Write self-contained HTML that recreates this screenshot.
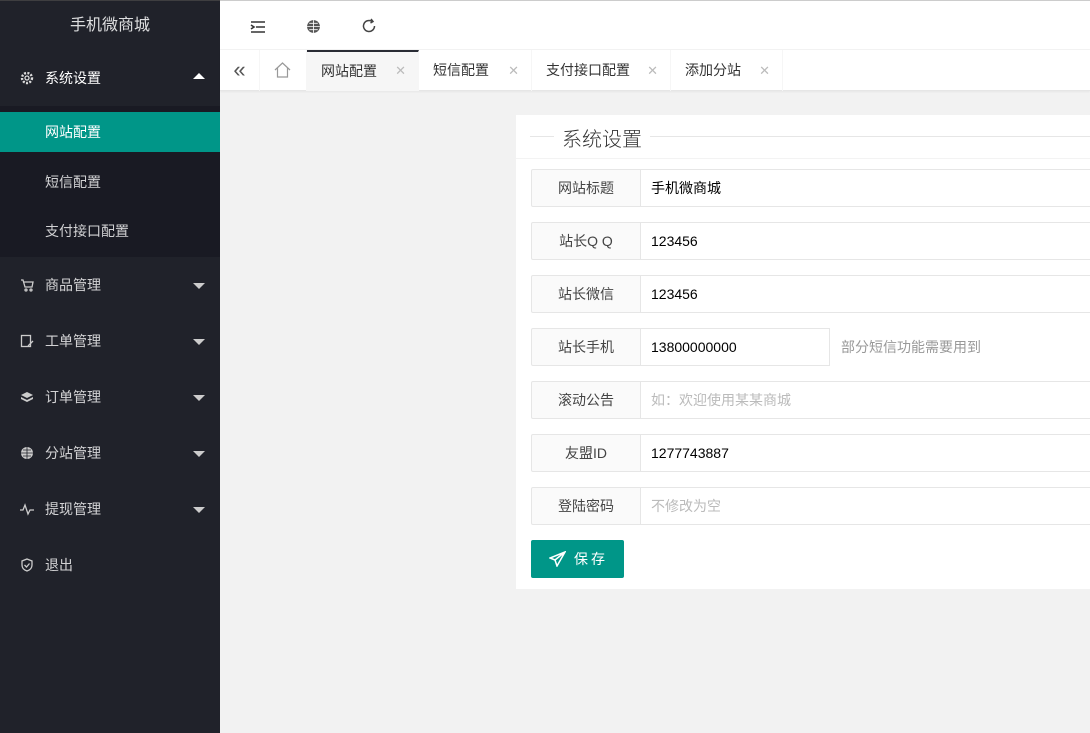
<!DOCTYPE html>
<html><head><meta charset="utf-8"><style>
*{margin:0;padding:0;box-sizing:border-box}
body{width:1090px;height:733px;overflow:hidden;font-family:"Liberation Sans","Noto Sans CJK SC",sans-serif;font-size:14px;background:#f2f2f2;position:relative;color:#333}
.side{position:absolute;left:0;top:0;width:220px;height:733px;background:#20222a;color:rgba(255,255,255,.8)}
.logo{height:50px;line-height:50px;text-align:center;font-size:16px;color:#fff;opacity:.85;border-top:1px solid #444}
.it{position:absolute;left:0;width:220px;height:56px;line-height:56px;padding-left:45px;font-size:14px}
.ic{position:absolute;left:20px;top:21px;width:14px;height:14px}
.tri{position:absolute;left:193px;top:26px;border-left:6px solid transparent;border-right:6px solid transparent;border-top:6px solid #ccc}
.tri.up{border-top:0;border-bottom:6px solid #fff;top:23px}
.sub{position:absolute;left:0;top:106px;width:220px;height:151px;background:#191a23}
.sub div{height:40px;line-height:40px;padding-left:45px;position:absolute;width:220px}
.head{position:absolute;left:220px;top:0;right:0;height:50px;background:#fff;border-top:1px solid #ccc;border-bottom:1px solid #f3f3f3}
.tabs{position:absolute;left:220px;top:50px;right:0;height:41px;background:#fff;border-bottom:1px solid #e6e6e6;box-shadow:0 1px 2px rgba(0,0,0,.05)}
.tab{position:absolute;top:0;height:41px;line-height:41px;padding-left:14px;font-size:14px;color:#333;border-right:1px solid #f6f6f6}
.tab i{position:absolute;right:12px;top:0;font-style:normal;color:#bbb;font-size:13px}
.card{position:absolute;left:516px;top:115px;width:574px;height:474px;background:#fff}
.leg{position:absolute;left:14px;top:21px;width:560px;border-top:1px solid #e6e6e6}
.legt{position:absolute;left:38px;top:8px;background:#fff;padding:0 8px;font-size:20px;color:#333;font-weight:300}
.lab{position:absolute;left:15px;width:110px;height:38px;line-height:36px;text-align:center;background:#fafafa;border:1px solid #e6e6e6;border-radius:2px 0 0 2px;color:#444}
.inp{position:absolute;left:124px;width:460px;height:38px;line-height:36px;padding-left:10px;border:1px solid #e6e6e6;color:#000}
.ph{color:#bbb}
.btn{position:absolute;left:15px;top:425px;width:93px;height:38px;background:#009688;color:#fff;border-radius:2px;line-height:38px;padding-left:43px;font-size:14px;letter-spacing:3px}
</style></head><body>
<div class="side">
<div class="logo">手机微商城</div>
<div class="it" style="top:50px;color:#fff"><svg class="ic" viewBox="0 0 14 14"><circle cx="7" cy="7" r="5" fill="none" stroke="#ddd" stroke-width="2.4" stroke-dasharray="2 1.4"/><circle cx="7" cy="7" r="2" fill="none" stroke="#ddd" stroke-width="1.3"/></svg>系统设置<span class="tri up"></span></div>
<div class="sub">
<div style="top:6px;background:#009688;color:#fff">网站配置</div>
<div style="top:56px">短信配置</div>
<div style="top:105px">支付接口配置</div>
</div>
<div class="it" style="top:257px"><svg class="ic" viewBox="0 0 14 14" fill="none" stroke="#ccc" stroke-width="1.3"><path d="M1 2h2l2 7h7l1-5H4"/><circle cx="6" cy="12" r="1"/><circle cx="11" cy="12" r="1"/></svg>商品管理<span class="tri"></span></div>
<div class="it" style="top:313px"><svg class="ic" viewBox="0 0 14 14" fill="none" stroke="#ccc" stroke-width="1.3"><rect x="1.5" y="1.5" width="9" height="11"/><path d="M8 12l5-5"/></svg>工单管理<span class="tri"></span></div>
<div class="it" style="top:369px"><svg class="ic" viewBox="0 0 14 14" fill="#ccc"><path d="M7 2l6 3-6 3-6-3z"/><path d="M1 7l6 3 6-3v2l-6 3-6-3z"/></svg>订单管理<span class="tri"></span></div>
<div class="it" style="top:425px"><svg class="ic" viewBox="0 0 14 14"><circle cx="7" cy="7" r="6" fill="#ccc"/><path d="M1 7h12M7 1v12M3 4h8M3 10h8" stroke="#20222a" stroke-width=".8"/></svg>分站管理<span class="tri"></span></div>
<div class="it" style="top:481px"><svg class="ic" viewBox="0 0 14 14" fill="none" stroke="#ccc" stroke-width="1.3"><path d="M0 8h3l2-5 3 9 2-4h4"/></svg>提现管理<span class="tri"></span></div>
<div class="it" style="top:537px"><svg class="ic" viewBox="0 0 14 14" fill="none" stroke="#ccc" stroke-width="1.3"><path d="M7 1l5 2v4c0 3-2 5-5 6-3-1-5-3-5-6V3z"/><path d="M4.5 7l2 2 3-3.5"/></svg>退出</div>
</div>
<div class="head">
<svg style="position:absolute;left:30px;top:19px" width="16" height="14" viewBox="0 0 16 14" fill="none" stroke="#333" stroke-width="1.6"><path d="M1 2h14M6 7h9M1 12h14M1 5l3 2-3 2"/></svg>
<svg style="position:absolute;left:86px;top:18px" width="15" height="15" viewBox="0 0 14 14"><circle cx="7" cy="7" r="6" fill="#555"/><path d="M1 7h12M7 1v12M3 4h8M3 10h8" stroke="#fff" stroke-width=".8"/></svg>
<svg style="position:absolute;left:141px;top:17px" width="16" height="16" viewBox="0 0 16 16" fill="none" stroke="#444" stroke-width="1.5"><path d="M13.5 8A5.5 5.5 0 1 1 11 3.4"/><path d="M10 1l2 2.5-2.5 1.5"/></svg>
</div>
<div class="tabs">
<div style="position:absolute;left:0;top:0;width:40px;height:41px;border-right:1px solid #f6f6f6;line-height:40px;text-align:center;font-size:22px;color:#555">«</div>
<svg style="position:absolute;left:54px;top:12px" width="17" height="16" viewBox="0 0 17 16" fill="none" stroke="#999" stroke-width="1.2"><path d="M1 8L8.5 1 16 8M3.5 6v9h10V6"/></svg>
<div style="position:absolute;left:40px;top:0;width:47px;height:41px;border-right:1px solid #f6f6f6"></div>
<div class="tab" style="left:87px;width:112px;background:#f6f6f6;border-top:2px solid #292b34;line-height:38px">网站配置<i>✕</i></div>
<div class="tab" style="left:199px;width:113px">短信配置<i>✕</i></div>
<div class="tab" style="left:312px;width:139px">支付接口配置<i>✕</i></div>
<div class="tab" style="left:451px;width:112px">添加分站<i>✕</i></div>
</div>
<div class="card">
<div class="leg"></div><div class="legt">系统设置</div>
<div style="position:absolute;left:0;top:43px;width:574px;border-top:1px solid #f3f3f3"></div>
<div class="lab" style="top:54px">网站标题</div><div class="inp" style="top:54px">手机微商城</div>
<div class="lab" style="top:107px">站长Q Q</div><div class="inp" style="top:107px">123456</div>
<div class="lab" style="top:160px">站长微信</div><div class="inp" style="top:160px">123456</div>
<div class="lab" style="top:213px">站长手机</div><div class="inp" style="top:213px;width:190px">13800000000</div>
<div style="position:absolute;left:325px;top:213px;line-height:38px;color:#999">部分短信功能需要用到</div>
<div class="lab" style="top:266px">滚动公告</div><div class="inp ph" style="top:266px">如：欢迎使用某某商城</div>
<div class="lab" style="top:319px">友盟ID</div><div class="inp" style="top:319px">1277743887</div>
<div class="lab" style="top:372px">登陆密码</div><div class="inp ph" style="top:372px">不修改为空</div>
<div class="btn"><svg style="position:absolute;left:18px;top:11px" width="17" height="16" viewBox="0 0 17 16" fill="none" stroke="#fff" stroke-width="1.5"><path d="M16 1L1 7l5 2 2 6zM6 9l10-8"/></svg>保存</div>
</div>
</body></html>
